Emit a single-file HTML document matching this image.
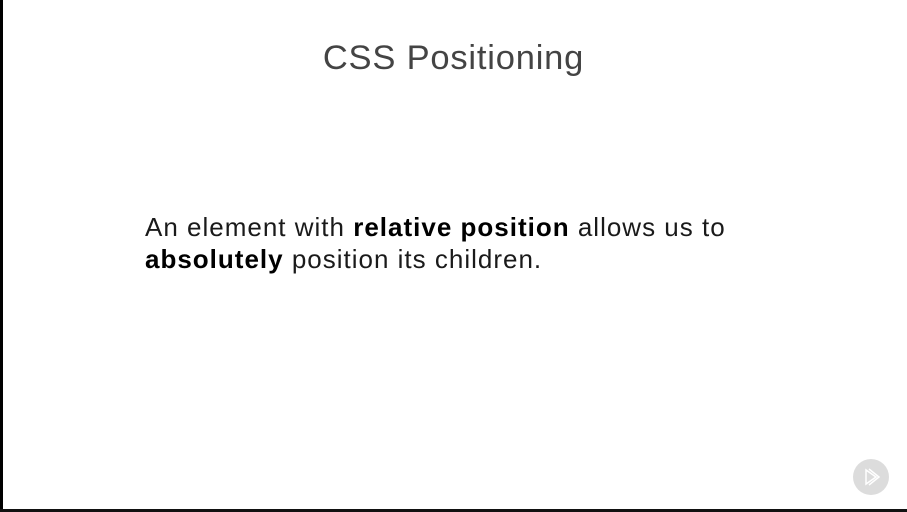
<!DOCTYPE html>
<html><head><meta charset="utf-8"><style>
html,body{margin:0;padding:0;}
body{width:907px;height:512px;position:relative;background:#fff;overflow:hidden;font-family:"Liberation Sans",sans-serif;}
.lb{position:absolute;left:0;top:0;width:3px;height:512px;background:#000;}
.bb{position:absolute;left:0;top:509px;width:907px;height:3px;background:#111;}
.title{position:absolute;left:0;width:907px;top:39px;text-align:center;font-size:34.5px;color:#444;letter-spacing:0.8px;}
.body{position:absolute;left:145px;top:211px;font-size:26px;line-height:32px;color:#1a1a1a;letter-spacing:1px;white-space:nowrap;}
.body b{color:#000;}
.ic{position:absolute;left:853px;top:459px;width:36px;height:36px;border-radius:50%;background:#dcdcdc;}
</style></head><body>
<div class="lb"></div>
<div class="title">CSS Positioning</div>
<div class="body">An element with <b>relative position</b> allows us to<br><b>absolutely</b> position its children.</div>
<div class="ic"><svg width="36" height="36" viewBox="0 0 36 36"><path d="M13 11v14l10-7z" fill="none" stroke="#fff" stroke-width="1.5"/><path d="M16 10l10 8-10 8" fill="none" stroke="#fff" stroke-width="1.5"/></svg></div>
<div class="bb"></div>
</body></html>
